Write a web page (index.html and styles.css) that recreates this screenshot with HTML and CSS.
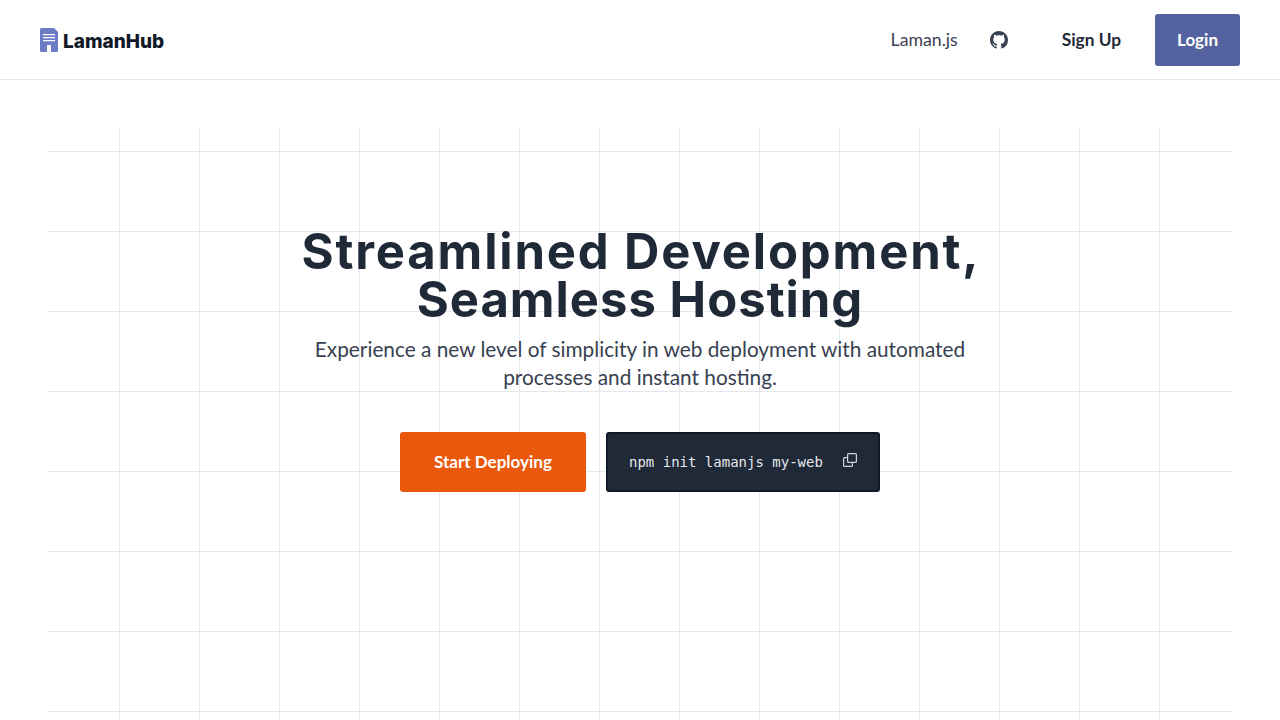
FILE: index.html
```html
<!DOCTYPE html>
<html lang="en">
<head>
<meta charset="utf-8">
<title>LamanHub</title>
<link rel="stylesheet" href="styles.css">
</head>
<body>
<header class="nav">
  <a class="brand" href="#">
    <svg class="brand-icon" viewBox="0 0 18 24" width="18" height="24" aria-hidden="true">
      <path d="M1.500 0H14L18 4V22.500A1.500 1.500 0 0 1 16.500 24H1.500A1.500 1.500 0 0 1 0 22.500V1.500A1.500 1.500 0 0 1 1.500 0Z" fill="#6b7cc4"/>
      <path d="M3 6H15V7.300H3ZM3 9H15V10.300H3ZM3 12H15V13.300H3Z" fill="#fff"/>
      <path d="M7 17H11V24H7Z" fill="#fff"/>
    </svg>
    <span class="brand-name">LamanHub</span>
  </a>
  <nav class="nav-links">
    <a class="nav-link" href="#">Laman.js</a>
    <a class="gh" href="#" aria-label="GitHub">
      <svg viewBox="0 0 16 16" width="18" height="18" aria-hidden="true"><path fill="#374151" d="M8 0C3.580 0 0 3.580 0 8c0 3.540 2.290 6.530 5.470 7.590.400.070.550-.170.550-.380 0-.190-.010-.820-.010-1.490-2.010.370-2.530-.490-2.690-.940-.090-.230-.480-.940-.820-1.130-.280-.150-.680-.520-.010-.530.630-.010 1.080.580 1.230.820.720 1.210 1.870.870 2.330.660.070-.520.280-.870.510-1.070-1.780-.200-3.640-.890-3.640-3.950 0-.870.310-1.590.820-2.150-.080-.200-.360-1.020.080-2.120 0 0 .670-.210 2.200.820.640-.180 1.320-.270 2-.270s1.360.090 2 .270c1.530-1.040 2.200-.820 2.200-.820.440 1.100.160 1.920.080 2.120.510.560.820 1.270.820 2.150 0 3.070-1.870 3.750-3.650 3.950.290.250.540.730.540 1.480 0 1.070-.010 1.930-.010 2.200 0 .210.150.460.550.380A8.010 8.010 0 0 0 16 8c0-4.420-3.580-8-8-8Z"/></svg>
    </a>
    <a class="signup" href="#">Sign Up</a>
    <a class="login" href="#">Login</a>
  </nav>
</header>
<main class="hero">
  <h1 class="title"><span class="line-one">Streamlined Development,</span><span class="line-two">Seamless Hosting</span></h1>
  <p class="lead">Experience a new level of simplicity in web deployment with automated processes and instant hosting.</p>
  <div class="actions">
    <a class="start" href="#">Start Deploying</a>
    <div class="cmd">
      <code class="cmd-text">npm init lamanjs my-web</code>
      <svg class="copy" viewBox="0 0 14 14" width="14" height="14" aria-hidden="true" fill="none" stroke="#d1d5db" stroke-width="1.200"><rect x="4.600" y="0.600" width="8.800" height="8.800" rx="1"/><path d="M4.600 4.600H1.600a1 1 0 0 0-1 1v6.800a1 1 0 0 0 1 1h6.800a1 1 0 0 0 1-1V9.400"/></svg>
    </div>
  </div>
</main>
</body>
</html>
```

FILE: styles.css
```css
* { box-sizing: border-box; }
html, body { margin: 0; height: 100%; overflow: hidden; }
body { background: #fff; font-family: Lato, "Noto Sans", sans-serif; color: #1f2937; }
a { text-decoration: none; color: inherit; }

.nav { height: 80px; padding: 0 40px; display: flex; align-items: center; justify-content: space-between; border-bottom: 1px solid #e5e7eb; }
.brand { display: flex; align-items: center; gap: 5px; margin-top: 1px; }
.brand-icon { display: block; }
.brand-name { font-family: Inter, sans-serif; font-weight: 800; font-size: 19px; color: #111827; position: relative; top: 1px; }
.nav-links { display: flex; align-items: center; }
.nav-link { font-size: 17.700px; color: #374151; margin-right: 32px; }
.gh { display: flex; margin-right: 54px; }
.signup { font-size: 17.300px; font-weight: 700; color: #1f2937; padding-right: 34px; }
.login { width: 85px; height: 52px; display: flex; align-items: center; justify-content: center; background: #54639f; color: #fff; font-size: 17px; font-weight: 700; border-radius: 3px; }

.hero { margin: 48px 48px 0; height: 592px; padding-top: 100px; display: flex; flex-direction: column; align-items: center; background-image: linear-gradient(#e5e7eb 1px, transparent 1px), linear-gradient(90deg, #e5e7eb 1px, transparent 1px); background-size: 80px 80px; background-position: 71px 23px; }
.title { margin: 0; font-family: Inter, sans-serif; font-weight: 700; font-size: 49px; line-height: 48px; text-align: center; color: #1f2937; }
.line-one { display: block; padding-left: 2px; letter-spacing: 1.850px; }
.line-two { display: block; letter-spacing: 1px; }
.lead { margin: 11px 0 0; width: 672px; font-size: 20.800px; line-height: 28px; text-align: center; color: #374151; }
.actions { display: flex; gap: 20px; margin-top: 41px; }
.start { width: 186px; height: 60px; padding-bottom: 2px; display: flex; align-items: center; justify-content: center; background: #ea580c; color: #fff; font-size: 17px; font-weight: 700; border-radius: 3px; }
.cmd { width: 274px; height: 60px; display: flex; align-items: center; justify-content: space-between; padding: 0 21px; background: #1f2937; border: 2px solid #111827; border-radius: 3px; }
.cmd-text { font-family: "DejaVu Sans Mono", monospace; font-size: 14px; color: #e5e7eb; }
.copy { display: block; margin-top: -4px; }
```
